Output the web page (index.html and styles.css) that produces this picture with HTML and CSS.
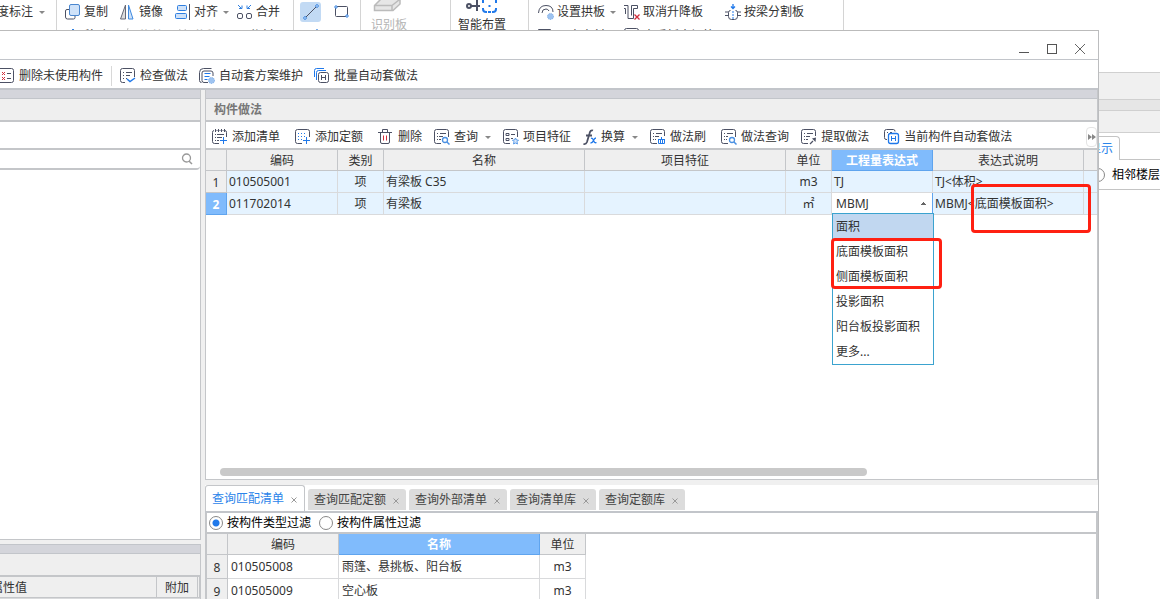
FILE: index.html
```html
<!DOCTYPE html>
<html lang="zh-CN">
<head>
<meta charset="utf-8">
<title>构件做法</title>
<link rel="stylesheet" href="styles.css">
</head>
<body>
<div class="app">
  <header class="ribbon">
    <div class="group group-dim">
      <div class="row row-cut"><button class="tool">度标注<i class="caret"></i></button></div>
      <div class="row row-cut"><button class="tool">图元</button></div>
    </div>
    <div class="group group-edit">
      <div class="row row-edit">
        <button class="tool"><svg class="icon" viewBox="0 0 16 16"><path d="M5 5.500H2q-1.500 0-1.500 1.500v6q0 2 2 2h6q1.500 0 1.500-1.500V12" fill="none" stroke="#4c5164"/><rect x="4.500" y=".5" width="10" height="11" rx="1.500" fill="#cfe2f9" stroke="#4a86cf"/></svg>复制</button>
        <button class="tool"><svg class="icon" viewBox="0 0 16 16"><path d="M5.500 1v14H.5z" fill="#ddd" stroke="#666a78"/><path d="M8.500 1v14H13z" fill="#cfe2f9" stroke="#3f8ae0"/></svg>镜像</button>
        <button class="tool"><svg class="icon" viewBox="0 0 16 16"><rect x="2.500" y="1.500" width="9" height="5" rx="1" fill="#cfe2f9" stroke="#2f7fe0"/><rect x=".5" y="9.500" width="11" height="5" rx="1" fill="#cfe2f9" stroke="#2f7fe0"/><path d="M14.500 0v16" stroke="#4c5164"/></svg>对齐<i class="caret"></i></button>
        <button class="tool"><svg class="icon" viewBox="0 0 16 16"><path d="M1 1l3.500 3.500M2 4.500h3V1.500M14 1l-3.500 3.500M10 1.500v3h3" fill="none" stroke="#2f7fe0"/><rect x=".5" y="9.500" width="5" height="5" rx="1.500" fill="none" stroke="#4c5164"/><rect x="9.500" y="9.500" width="5" height="5" rx="1.500" fill="none" stroke="#4c5164"/></svg>合并</button>
      </div>
      <div class="row row-edit">
        <button class="tool"><svg class="icon" viewBox="0 0 16 16"><path d="M8 1v14M1 8h14M5.500 3.500L8 1l2.500 2.500" fill="none" stroke="#2f7fe0"/></svg>移动</button>
        <button class="tool tool-off"><svg class="icon" viewBox="0 0 16 16"><path d="M8 0L4 15M9 5h6" fill="none" stroke="#bbb"/></svg>修剪</button>
        <button class="tool tool-off"><svg class="icon" viewBox="0 0 16 16"><path d="M5 1L2 8l3 7M10 1l3 7-3 7" fill="none" stroke="#bbb"/></svg>偏移</button>
        <button class="tool"><svg class="icon" viewBox="0 0 16 16"><path d="M2 6h12M2 10h12" fill="none" stroke="#4c5164"/></svg>分割</button>
      </div>
    </div>
    <div class="group group-draw">
      <div class="row">
        <button class="draw draw-on" aria-label="直线"><svg class="icon" viewBox="0 0 16 16"><path d="M3 13L13 3" stroke="#4c5164"/><circle cx="2" cy="14" r="1.300" fill="#fff" stroke="#2f7fe0"/><circle cx="14" cy="2" r="1.300" fill="#fff" stroke="#2f7fe0"/></svg></button>
        <button class="draw" aria-label="矩形"><svg class="icon" viewBox="0 0 16 16"><rect x="1.500" y="2.500" width="12" height="10" rx="1" fill="none" stroke="#4c5164"/><circle cx="2" cy="3" r="1.200" fill="#fff" stroke="#2f7fe0"/><circle cx="13" cy="12" r="1.200" fill="#fff" stroke="#2f7fe0"/></svg></button>
      </div>
      <div class="row">
        <button class="draw" aria-label="弧线"><svg class="icon" viewBox="0 0 16 16"><path d="M2 12Q3 4 13 3" fill="none" stroke="#4c5164"/><circle cx="14" cy="3" r="1.300" fill="#fff" stroke="#2f7fe0"/></svg></button>
      </div>
    </div>
    <div class="group group-detect">
      <button class="big tool-off"><svg class="big-icon" viewBox="0 0 32 16"><path d="M1.500 6.500L8 0H27v5l-7 6.500H1.500zM1.500 6.500H19v5M19 6.500L26 1" fill="#e6e6e6" stroke="#bbb" stroke-width="1.500"/></svg>识别板</button>
    </div>
    <div class="group group-smart">
      <button class="big"><svg class="big-icon" viewBox="0 0 32 16"><circle cx="3" cy="7" r="2" fill="none" stroke="#4c5164" stroke-width="2"/><path d="M5 7h9M11 0v12" stroke="#4c5164" stroke-width="2"/><path d="M17 4V0M17 9v1q0 3 3 3h1M26 13h1q3 0 3-3V9M30 4V0M22.500 7h2M22 13h3" fill="none" stroke="#2079ea" stroke-width="2"/></svg>智能布置</button>
    </div>
    <div class="group group-slab">
      <div class="row row-slab">
        <button class="tool"><svg class="icon" viewBox="0 0 16 16"><path d="M.5 9Q1 1.500 8 1.500T15 8M4 9q0-4 4-4 2 0 3 2" fill="none" stroke="#4c5164"/><circle cx="12.500" cy="12.500" r="3" fill="#9ec3f0" stroke="#75a8e6" stroke-dasharray="1 1"/></svg>设置拱板<i class="caret"></i></button>
        <button class="tool"><svg class="icon" viewBox="0 0 16 16"><path d="M0 1.500h4v13h5.500v-10h4v-3H7.500v10M0 4.500h1.500V10" fill="none" stroke="#4c5164"/><path d="M10.500 10.500l5 5M15.500 10.500l-5 5" stroke="#d22e3c" stroke-width="1.300"/></svg>取消升降板</button>
        <button class="tool"><svg class="icon" viewBox="0 0 16 16"><path d="M8 0v4M6 2.500L8 4.500l2-2" fill="none" stroke="#2079ea" stroke-width="1.300"/><path d="M0 8h3.500M0 11.500h3.500M12.500 8H16M12.500 11.500H16M5.500 6.500q-2 0-2 2v4q0 3 3 3h3q3 0 3-3v-4q0-2-2-2" fill="none" stroke="#4c5164"/><path d="M8 7v8" stroke="#2079ea" stroke-dasharray="2 1"/></svg>按梁分割板</button>
      </div>
      <div class="row row-slab">
        <button class="tool"><svg class="icon" viewBox="0 0 16 16"><path d="M.5 5V1.500H12.500V6M2 15h12" fill="none" stroke="#4c5164"/></svg>三点变斜<i class="caret"></i></button>
        <button class="tool"><svg class="icon" viewBox="0 0 16 16"><rect x=".5" y=".5" width="14" height="14" rx="2" fill="none" stroke="#4c5164"/><path d="M5 12l3-9 3 9" fill="none" stroke="#4c5164"/></svg>查看板内钢筋</button>
      </div>
    </div>
  </header>

  <aside class="side">
    <div class="side-bar"></div>
    <div class="side-bar side-bar-dark"></div>
    <div class="side-bar side-bar-low"></div>
    <div class="side-tabs"><button class="side-tab">显示</button></div>
    <label class="side-option"><input class="radio" type="radio" name="floor">相邻楼层</label>
  </aside>

  <section class="dialog" role="dialog" aria-label="构件做法">
    <div class="titlebar">
      <button class="win" aria-label="最小化"><svg viewBox="0 0 12 12"><path d="M1 9.500h10" stroke="#555"/></svg></button>
      <button class="win" aria-label="最大化"><svg viewBox="0 0 12 12"><rect x="1.500" y="1.500" width="9" height="9" fill="none" stroke="#555"/></svg></button>
      <button class="win" aria-label="关闭"><svg viewBox="0 0 12 12"><path d="M1 1l10 10M11 1L1 11" stroke="#666"/></svg></button>
    </div>
    <div class="actions">
      <button class="tool"><svg class="icon" viewBox="0 0 16 16"><rect x="-3.500" y=".5" width="18" height="14" rx="2" fill="none" stroke="#4c5164"/><path d="M3 4l3 3M6 4L3 7M3 9l3 3M6 9l-3 3" stroke="#d22e3c"/><path d="M8 5.500h4M8 10.500h4" stroke="#4c5164"/></svg>删除未使用构件</button>
      <span class="divider"></span>
      <button class="tool"><svg class="icon" viewBox="0 0 16 16"><path d="M5 14.500H2.500q-2 0-2-2v-10q0-2 2-2h10q2 0 2 2V9M3 4.500h1M6 4.500h6M3 7.500h1M6 7.500h4M3 10.500h1M6 10.500h1" fill="none" stroke="#4c5164"/><path d="M7 11l3 2.500L15 10" fill="none" stroke="#2079ea" stroke-width="1.500"/></svg>检查做法</button>
      <button class="tool"><svg class="icon" viewBox="0 0 16 16"><path d="M2.500 14.500q-2 0-2-2v-8q0-4 4-4h8M9 14.500H5q-2 0-2-2V5q0-2 2-2h7q2 0 2 2v3" fill="none" stroke="#4c5164"/><path d="M5.500 5.500h6M5.500 8.500h5M5.500 11.500h3" stroke="#2079ea"/><circle cx="12.500" cy="12.500" r="3" fill="#9ec3f0" stroke="#75a8e6" stroke-dasharray="1 1"/></svg>自动套方案维护</button>
      <button class="tool"><svg class="icon" viewBox="0 0 16 16"><path d="M.5 9V2.500q0-2 2-2H10M2.500 12V4.500q0-2 2-2H12" fill="none" stroke="#2079ea"/><rect x="4.500" y="4.500" width="10" height="10" rx="2" fill="#fff" stroke="#4c5164"/><path d="M7.500 7v5M11.500 7v5M7.500 9.500h4" stroke="#4c5164"/></svg>批量自动套做法</button>
    </div>

    <div class="panes">
      <div class="left">
        <div class="pane-list">
          <div class="strip"></div>
          <div class="pane-title"></div>
          <div class="pane-tools"></div>
          <div class="search"><input type="search" aria-label="搜索"><svg class="search-icon" viewBox="0 0 12 12"><circle cx="5.500" cy="5" r="4" fill="none" stroke="#999" stroke-width="1.300"/><path d="M8 8l3 3" stroke="#999" stroke-width="1.500"/></svg></div>
          <div class="pane-space"></div>
        </div>
        <div class="pane-props">
          <div class="strip"></div>
          <div class="pane-title"></div>
          <table class="grid props">
            <colgroup><col><col class="c-add"><col class="c-end"></colgroup>
            <thead><tr><th class="cut">属性值</th><th>附加</th><th></th></tr></thead>
            <tbody><tr><td></td><td></td><td></td></tr></tbody>
          </table>
        </div>
      </div>

      <div class="right">
        <div class="pane-main">
          <div class="strip"></div>
          <h2 class="pane-title">构件做法</h2>
          <div class="toolbar">
            <button class="tool roomy"><svg class="icon" viewBox="0 0 16 16"><path d="M7 14.500H2.500q-2 0-2-2v-9q0-2 1.500-2M13 1.500q1.500 0 1.500 2V8M3.500 0v3M6.500 0v3M9.500 0v3M12.500 0v3M4.500 1.500h1M7.500 1.500h1M10.500 1.500h1M3 5.500h1M5 5.500h7M3 8.500h1M5 8.500h5M3 11.500h1M5 11.500h2" fill="none" stroke="#4c5164"/><path d="M11.500 8v7M8 11.500h7" stroke="#2079ea"/></svg>添加清单</button>
            <button class="tool roomy"><svg class="icon" viewBox="0 0 16 16"><path d="M7 14.500H2.500q-2 0-2-2v-10q0-2 2-2h10q2 0 2 2V8" fill="none" stroke="#4c5164"/><path d="M3 4.500h9M3 7.500h7M3 10.500h4" stroke="#2079ea" stroke-dasharray="1 2"/><path d="M11.500 8v7M8 11.500h7" stroke="#2079ea"/></svg>添加定额</button>
            <button class="tool"><svg class="icon" viewBox="0 0 16 16"><path d="M0 3.500h14M4.500 3V.5h5V3M2.500 4v9q0 1.500 1.500 1.500h6q1.500 0 1.500-1.500V4" fill="none" stroke="#4c5164"/><path d="M5.500 6.500v5M8.500 6.500v5" stroke="#d22e3c"/></svg>删除</button>
            <button class="tool"><svg class="icon" viewBox="0 0 16 16"><path d="M7 14.500H2.500q-2 0-2-2v-10q0-2 2-2h10q2 0 2 2V8M3 4.500h1M6 4.500h6M3 7.500h1M5 7.500h4M3 10.500h1M5 10.500h2" fill="none" stroke="#4c5164"/><circle cx="11" cy="11" r="2.500" fill="none" stroke="#4a90e2" stroke-width="1.300"/><path d="M13 13l2.500 2.500" stroke="#4a90e2" stroke-width="1.500"/></svg>查询<i class="caret"></i></button>
            <button class="tool"><svg class="icon" viewBox="0 0 16 16"><path d="M7 14.500H2.500q-2 0-2-2v-10q0-2 2-2h10q2 0 2 2V8M3 4.500h3v2H3zM8 5.500h4M3 9.500h3v2H3zM8 9.500h2" fill="none" stroke="#4c5164"/><path d="M12.500 9l1 2 2 .2-1.500 1.500.5 2.300-2-1-2 1 .5-2.300-1.500-1.500 2-.2z" fill="#d6e6fa" stroke="#5a9be8"/></svg>项目特征</button>
            <button class="tool"><svg class="icon icon-fx" viewBox="0 0 14 16"><path d="M10 1.500q-2.500-1-3.500 3L4 13q-1 2.500-3.500 2M3 6.500h6" fill="none" stroke="#4c5164" stroke-width="1.800"/><path d="M8 9.500q1.500-1 2.500 2t3 2M13 9q-1.500 0-2.500 2.500T7.500 14" fill="none" stroke="#2079ea" stroke-width="1.300"/></svg>换算<i class="caret"></i></button>
            <button class="tool roomy"><svg class="icon" viewBox="0 0 16 16"><path d="M7 14.500H2.500q-2 0-2-2v-10q0-2 2-2h10q2 0 2 2V7M3 4.500h1M6 4.500h6M3 7.500h1M5 7.500h4M3 10.500h1M5 10.500h1" fill="none" stroke="#4c5164"/><path d="M11.500 8v2.500M8 10.500h7M8.500 11v3.500h6V11M10.500 11v3M12.500 11v3" fill="none" stroke="#2079ea"/></svg>做法刷</button>
            <button class="tool"><svg class="icon" viewBox="0 0 16 16"><path d="M7 14.500H2.500q-2 0-2-2v-10q0-2 2-2h10q2 0 2 2V8M3 4.500h1M6 4.500h6M3 7.500h1M5 7.500h2M3 10.500h1M5 10.500h1" fill="none" stroke="#4c5164"/><circle cx="11" cy="11" r="2.500" fill="none" stroke="#4a90e2" stroke-width="1.300"/><path d="M13 13l2.500 2.500" stroke="#4a90e2" stroke-width="1.500"/></svg>做法查询</button>
            <button class="tool roomy"><svg class="icon" viewBox="0 0 16 16"><path d="M7 14.500H2.500q-2 0-2-2v-10q0-2 2-2h10q2 0 2 2V7M3 4.500h1M6 4.500h6M3 7.500h1M5 7.500h4M3 10.500h1M5 10.500h2" fill="none" stroke="#4c5164"/><path d="M9 15l3-3" stroke="#4c5164" stroke-width="1.300"/><path d="M11 9.500l3.500 3.500.5-4.500z" fill="#4c5164"/></svg>提取做法</button>
            <button class="tool"><svg class="icon" viewBox="0 0 16 16"><path d="M3 10.500H2q-1.500 0-1.500-2V2.500q0-2 2-2h7q1.500 0 1.500 2M3 3.500h1M6 3.500h2" fill="none" stroke="#4c5164"/><rect x="4.500" y="4.500" width="10" height="10" rx="2" fill="#fff" stroke="#2079ea" stroke-width="1.300"/><path d="M7.500 7v5M11.500 7v5M7.500 9.500h4" stroke="#2079ea"/></svg>当前构件自动套做法</button>
            <button class="more" aria-label="更多"><svg viewBox="0 0 8 6"><path d="M0 0l4 3-4 3zM4 0l4 3-4 3z" fill="#888"/></svg></button>
          </div>
          <div class="sheet">
            <table class="grid bill">
              <colgroup><col class="c-num"><col class="c-code"><col class="c-unit"><col class="c-name"><col class="c-name"><col class="c-unit"><col class="c-expr"><col class="c-note"><col></colgroup>
              <thead><tr><th></th><th>编码</th><th>类别</th><th>名称</th><th>项目特征</th><th>单位</th><th class="picked">工程量表达式</th><th>表达式说明</th><th></th></tr></thead>
              <tbody>
                <tr><th>1</th><td>010505001</td><td class="mid">项</td><td>有梁板 C35</td><td></td><td class="mid">m3</td><td>TJ</td><td>TJ&lt;体积&gt;</td><td></td></tr>
                <tr><th class="picked">2</th><td>011702014</td><td class="mid">项</td><td>有梁板</td><td></td><td class="mid">㎡</td>
                  <td class="editing">
                    <select class="expr" aria-label="工程量表达式"><option>MBMJ</option></select>
                    <ul class="menu">
                      <li class="menu-on">面积</li><li>底面模板面积</li><li>侧面模板面积</li><li>投影面积</li><li>阳台板投影面积</li><li>更多...</li>
                    </ul>
                    <span class="mark mark-menu"></span>
                  </td>
                  <td class="noted">MBMJ&lt;底面模板面积&gt;<span class="mark mark-note"></span></td><td></td></tr>
              </tbody>
            </table>
            <div class="scroll"><div class="thumb"></div></div>
          </div>
        </div>

        <div class="pane-query">
          <div class="tabs">
            <button class="tab tab-on">查询匹配清单<svg class="x" viewBox="0 0 6 6"><path d="M.5.5l5 5M5.500.5l-5 5" stroke="#999"/></svg></button>
            <button class="tab">查询匹配定额<svg class="x" viewBox="0 0 6 6"><path d="M.5.5l5 5M5.500.5l-5 5" stroke="#999"/></svg></button>
            <button class="tab">查询外部清单<svg class="x" viewBox="0 0 6 6"><path d="M.5.5l5 5M5.500.5l-5 5" stroke="#999"/></svg></button>
            <button class="tab">查询清单库<svg class="x" viewBox="0 0 6 6"><path d="M.5.5l5 5M5.500.5l-5 5" stroke="#999"/></svg></button>
            <button class="tab">查询定额库<svg class="x" viewBox="0 0 6 6"><path d="M.5.5l5 5M5.500.5l-5 5" stroke="#999"/></svg></button>
          </div>
          <div class="query-body">
            <div class="filters">
              <label><input class="radio" type="radio" name="filter" checked>按构件类型过滤</label>
              <label><input class="radio" type="radio" name="filter">按构件属性过滤</label>
            </div>
            <table class="grid match">
              <colgroup><col class="c-num"><col class="c-code"><col class="c-name"><col class="c-unit"></colgroup>
              <thead><tr><th></th><th>编码</th><th class="picked">名称</th><th>单位</th></tr></thead>
              <tbody>
                <tr><th>8</th><td>010505008</td><td>雨篷、悬挑板、阳台板</td><td class="mid">m3</td></tr>
                <tr><th>9</th><td>010505009</td><td>空心板</td><td class="mid">m3</td></tr>
              </tbody>
            </table>
          </div>
        </div>
      </div>
    </div>
  </section>
</div>
</body>
</html>
```
FILE: styles.css
```css
* { box-sizing: border-box; }

body {
  margin: 0;
  background: #fff;
  color: #333;
  font: 12px/20px "Noto Sans", "Noto Sans CJK SC", sans-serif;
}

button, input, select { font: inherit; color: inherit; }

button {
  border: 0;
  padding: 0;
  background: none;
  white-space: nowrap;
}

.app {
  position: relative;
  height: 100vh;
  overflow: hidden;
  display: flex;
  flex-direction: column;
}

.icon { width: 16px; height: 16px; flex: none; }
.icon-fx { width: 14px; }
.tool { display: flex; align-items: center; gap: 4px; flex: none; }
.tool-off { color: #b5b5b5; }
.roomy { padding-right: 3px; }
.caret {
  border: 3px solid transparent;
  border-top-color: #888;
  border-bottom: 0;
  margin-left: 2px;
}

/* Ribbon */
.ribbon { display: flex; height: 72px; flex: none; }
.group { border-right: 1px solid #d4d4d4; flex: none; padding-top: 1px; overflow: hidden; }
.row { display: flex; align-items: center; height: 22px; }
.row + .row { margin-top: 2px; }
.group-dim { width: 57px; }
.row-cut { justify-content: flex-end; padding-right: 11px; }
.row-cut + .row-cut { padding-right: 22px; }
.group-edit { width: 237px; padding-left: 8px; }
.row-edit { gap: 12px; }
.row-edit .tool { gap: 3px; }
.row-edit .caret { margin-right: -4px; }
.group-draw { width: 67px; padding-left: 6px; }
.group-draw .row { gap: 10px; }
.draw { display: grid; place-items: center; width: 21px; height: 20px; border-radius: 3px; }
.draw-on { background: #c2daf4; }
.group-detect { width: 90px; padding-left: 10px; }
.group-smart { width: 78px; padding-left: 7px; }
.big { display: grid; justify-items: center; margin-top: -2px; line-height: 19px; }
.big-icon { width: 32px; height: 16px; }
.group-slab { width: 315px; padding-left: 9px; }
.row-slab { gap: 8px; }
.row-slab .tool { gap: 3px; }
.row-slab .tool + .tool + .tool { margin-left: 14px; }

/* Panel behind the dialog */
.side { width: 61px; margin-left: auto; flex: none; }
.side-bar { height: 27px; background: #f0f0f0; border-top: 1px solid #d0d0d0; }
.side-bar-dark { height: 11px; background: #e6e6e6; }
.side-bar-low { height: 23px; border-bottom: 1px solid #d0d0d0; }
.side-tabs { padding-top: 3px; border-bottom: 1px solid #c4c4c4; height: 27px; }
.side-tab {
  width: 21px;
  height: 24px;
  display: flex;
  justify-content: flex-end;
  align-items: center;
  padding-right: 6px;
  color: #2b84ea;
  background: #fff;
  border: 1px solid #c4c4c4;
  border-width: 1px 1px 0 0;
  border-radius: 0 4px 0 0;
}
.side-option {
  display: flex;
  align-items: center;
  gap: 7px;
  height: 30px;
  margin-left: -8px;
  border-bottom: 1px solid #c4c4c4;
  white-space: nowrap;
  color: #000;
}

.radio {
  appearance: none;
  width: 14px;
  height: 14px;
  flex: none;
  margin: 0;
  border: 1px solid #888;
  border-radius: 50%;
  background: #fff;
}
.radio:checked { background: radial-gradient(#2079ea 3px, #fff 4px); }

/* Dialog window */
.dialog {
  position: absolute;
  inset: 30px 61px 0 0;
  display: flex;
  flex-direction: column;
  overflow: hidden;
  background: #fff;
  border-top: 1px solid #bbb;
  border-right: 1px solid #bcbdbf;
}
.titlebar {
  display: flex;
  justify-content: flex-end;
  align-items: center;
  gap: 16px;
  height: 29px;
  padding: 8px 12px 0 0;
  border-bottom: 1px solid #c2c5ca;
  flex: none;
}
.win { width: 12px; height: 12px; display: grid; }
.actions {
  display: flex;
  align-items: center;
  gap: 11px;
  height: 30px;
  margin-left: -1px;
  padding-top: 4px;
  border-bottom: 2px solid #c2c5ca;
  flex: none;
}
.divider { width: 1px; height: 20px; background: #d8d8d8; margin: 0 -3px; }

.panes { flex: 1; display: flex; gap: 4px; background: #f0f0f0; min-height: 0; }
.left { width: 201px; flex: none; display: flex; flex-direction: column; gap: 4px; }
.pane-list, .pane-props { border-right: 1px solid #c4c6c9; background: #fff; }
.pane-list { flex: 1; display: flex; flex-direction: column; border-bottom: 1px solid #c4c6c9; }
.pane-props { height: 55px; overflow: hidden; border-top: 1px solid #c2c5ca; }
.strip { height: 9px; background: #d4d5db; border-bottom: 1px solid #c2c5ca; flex: none; }
.pane-title {
  height: 23px;
  margin: 0;
  padding-left: 8px;
  background: #efefef;
  border-bottom: 2px solid #c4c6c9;
  font-size: 12px;
  line-height: 22px;
  color: #777;
  flex: none;
}
.pane-tools { height: 28px; border-bottom: 2px solid #c4c6c9; }
.search {
  display: flex;
  align-items: center;
  height: 20px;
  padding-right: 7px;
  border-bottom: 2px solid #c4c6c9;
  border-radius: 0 4px 4px 0;
}
.search input { flex: 1; min-width: 0; height: 16px; border: 0; outline: 0; background: none; }
.search-icon { width: 12px; height: 12px; }
.pane-space { flex: 1; }

.right { flex: 1; min-width: 0; display: flex; flex-direction: column; gap: 5px; }
.pane-main {
  flex: 1;
  display: flex;
  flex-direction: column;
  min-height: 0;
  background: #fff;
  border: 1px solid #c4c6c9;
  border-top: 0;
}
.toolbar {
  display: flex;
  align-items: center;
  gap: 12px;
  height: 28px;
  padding: 4px 0 0 6px;
  border-bottom: 2px solid #c4c6c9;
  flex: none;
}
.toolbar .caret { margin-left: 3px; }
.more {
  display: grid;
  place-items: center;
  width: 11px;
  height: 20px;
  margin-left: auto;
  border: 1px solid #e4e4e4;
  border-radius: 4px;
}
.more svg { width: 8px; height: 6px; }
.sheet { flex: 1; display: flex; flex-direction: column; justify-content: space-between; }

/* Data grids */
.grid { table-layout: fixed; border-collapse: separate; border-spacing: 0; line-height: 20px; }
.bill, .props { width: 100%; }
.match { width: 379px; }
.c-num { width: 21px; }
.c-code { width: 111px; }
.c-unit { width: 46px; }
.c-name { width: 201px; }
.c-expr { width: 101px; }
.c-note { width: 151px; }
.c-add { width: 41px; }
.c-end { width: 2px; }
.grid th, .grid td {
  padding: 0 2px;
  border: 1px solid #d9dadc;
  border-width: 0 1px 1px 0;
  white-space: nowrap;
}
.grid th { padding: 1px 0 0; line-height: 19px; font-weight: 400; text-align: center; background: #efefef; border-color: #c4c6c9; }
.grid thead th { height: 21px; }
.match thead th, .props thead th { padding-top: 2px; line-height: 18px; }
.grid .cut { text-align: left; text-indent: -9px; }
.bill td { height: 22px; background: #e5f3ff; }
.bill th:last-child, .bill td:last-child { border-right: 0; }
.match td { height: 24px; padding: 0 3px; }
.grid .mid { text-align: center; }
.grid .picked { background: #80bbfc; border-color: #5fa4ee; color: #fff; font-weight: 700; }

.bill .editing { position: relative; padding: 0; background: #fff; border-color: #5fa4ee; }
.expr {
  appearance: none;
  display: block;
  width: 100%;
  height: 20px;
  padding: 0 4px;
  border: 0;
  border-radius: 0;
  outline: 0;
  line-height: 20px;
  background: conic-gradient(from 135deg at 50% 0, #666 90deg, transparent 0) right 5px center / 6px 3px no-repeat #fff;
}
.menu {
  position: absolute;
  z-index: 1;
  top: 20px;
  left: 0;
  width: 102px;
  margin: 0;
  padding: 0;
  list-style: none;
  line-height: 25px;
  background: #fff;
  border: 1px solid #3ba3cf;
}
.menu li { padding-left: 3px; }
.menu-on { background: #c1d7f0; }
.noted { position: relative; }
.mark { position: absolute; z-index: 2; border: 3px solid #ff2012; border-radius: 4px; pointer-events: none; }
.mark-menu { top: 45px; left: -1px; width: 111px; height: 51px; }
.mark-note { top: -9px; left: 38px; width: 120px; height: 49px; }

.scroll { padding: 0 14px 3px; }
.thumb { width: 75%; height: 8px; border-radius: 4px; background: #c9c9c9; }

/* Query pane */
.pane-query { height: 114px; flex: none; display: flex; flex-direction: column; background: #fff; }
.tabs { display: flex; align-items: flex-end; gap: 3px; height: 28px; border-bottom: 2px solid #c2c5ca; flex: none; }
.tab {
  display: flex;
  align-items: center;
  gap: 7px;
  height: 21px;
  margin-bottom: 1px;
  padding: 0 7px 0 6px;
  background: #dcdcdc;
  border-radius: 3px 3px 0 0;
  color: #444;
}
.tab-on {
  height: 26px;
  margin-bottom: 0;
  background: #fff;
  border: 1px solid #c4c6c9;
  border-bottom: 0;
  color: #2b84ea;
}
.x { width: 6px; height: 6px; margin-top: 2px; }
.query-body { flex: 1; min-height: 0; overflow: hidden; border: 2px solid #c4c6c9; border-width: 0 2px; }
.filters { display: flex; gap: 8px; height: 21px; padding-left: 2px; border-bottom: 2px solid #c4c6c9; color: #000; }
.filters label { display: flex; align-items: center; gap: 4px; }
```
